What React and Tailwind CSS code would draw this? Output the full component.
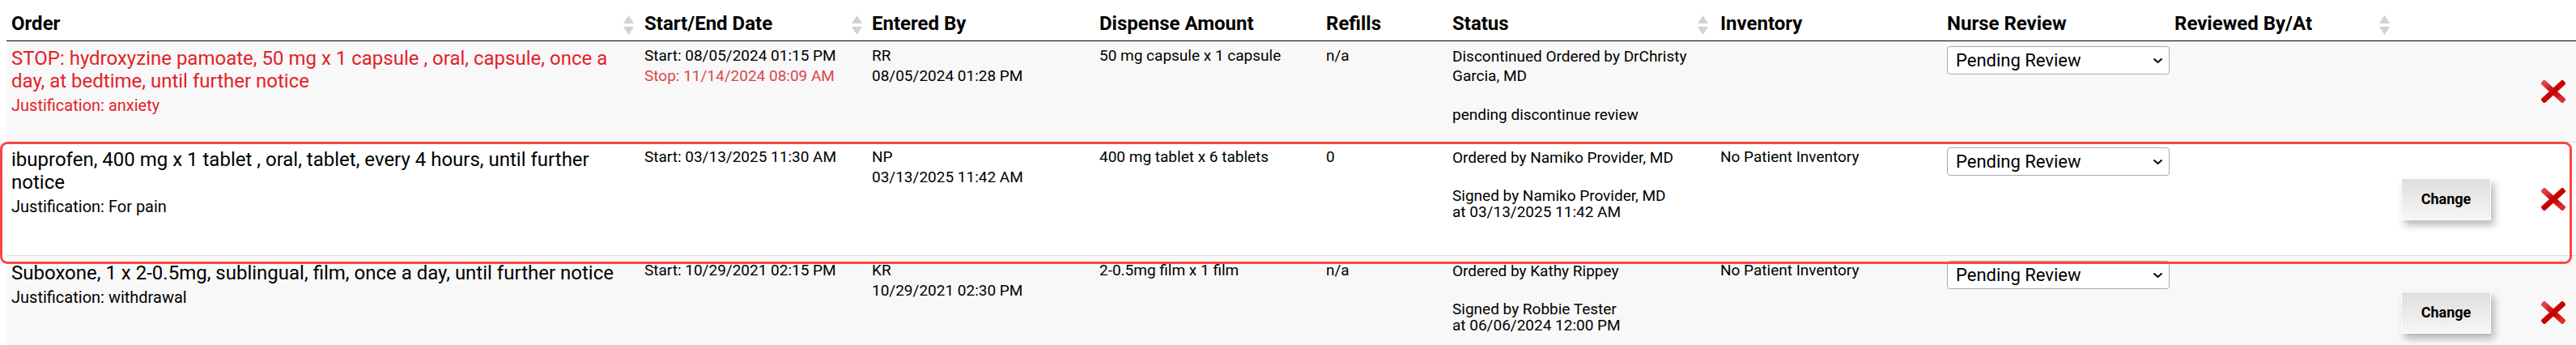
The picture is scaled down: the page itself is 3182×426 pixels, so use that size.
import React from 'react';

const GRID = 'grid grid-cols-[782px_281px_281px_280px_156px_331px_280px_281px_280px_173px_1fr]';

const SortArrows = () => (
  <svg width="13" height="24" viewBox="0 0 13 24" className="shrink-0">
    <polygon points="6.5,0 13,10 0,10" fill="#d2d2d2" />
    <polygon points="0,14 13,14 6.5,24" fill="#d2d2d2" />
  </svg>
);

const HeadCell = ({ children, sort, pr = 'pr-[6px]' }) => (
  <div className={`flex items-end justify-between pl-[6px] ${pr} pb-[7px]`}>
    <span className="text-[24px] leading-[28px] font-bold text-black whitespace-nowrap">{children}</span>
    {sort && <SortArrows />}
  </div>
);

const DeleteIcon = () => (
  <svg width="30" height="28" viewBox="0 0 30 28">
    <defs>
      <linearGradient id="xg" x1="0" y1="0" x2="1" y2="1">
        <stop offset="0" stopColor="#e24545" />
        <stop offset="0.5" stopColor="#c40000" />
        <stop offset="1" stopColor="#d83030" />
      </linearGradient>
    </defs>
    <path d="M4 4 L26 24 M26 4 L4 24" stroke="url(#xg)" strokeWidth="7" strokeLinecap="square" />
  </svg>
);

const NurseSelect = () => (
  <div className="w-[275px] h-[35px] flex items-center justify-between bg-white border border-[#aaa] rounded-[4px] pl-[10px] pr-[7px]">
    <span className="text-[22px] leading-none text-black">Pending Review</span>
    <svg width="13" height="8" viewBox="0 0 13 8">
      <path d="M1.5 1.5 L6.5 6 L11.5 1.5" fill="none" stroke="#000" strokeWidth="2" />
    </svg>
  </div>
);

const ChangeButton = () => (
  <button className="w-[111px] h-[52px] border border-white bg-linear-to-b from-[#dedede] to-[#f6f6f6] shadow-[4px_6px_9px_rgba(0,0,0,0.28)] text-[18px] font-bold text-black">
    Change
  </button>
);

const Cell = ({ children, className = '' }) => (
  <div className={`pl-[6px] pt-[5px] text-[19px] leading-[25px] text-black ${className}`}>{children}</div>
);

const rows = [
  {
    bg: 'bg-[#f8f8f8]',
    h: 'h-[125px]',
    stop: true,
    order: 'STOP: hydroxyzine pamoate, 50 mg x 1 capsule , oral, capsule, once a day, at bedtime, until further notice',
    justification: 'anxiety',
    start: 'Start: 08/05/2024 01:15 PM',
    end: 'Stop: 11/14/2024 08:09 AM',
    by: 'RR',
    enteredAt: '08/05/2024 01:28 PM',
    dispense: '50 mg capsule x 1 capsule',
    refills: 'n/a',
    ordered: 'Discontinued Ordered by DrChristy Garcia, MD',
    note: 'pending discontinue review',
    inventory: '',
    change: false,
  },
  {
    bg: 'bg-white',
    h: 'h-[140px]',
    selected: true,
    order: 'ibuprofen, 400 mg x 1 tablet , oral, tablet, every 4 hours, until further notice',
    justification: 'For pain',
    start: 'Start: 03/13/2025 11:30 AM',
    by: 'NP',
    enteredAt: '03/13/2025 11:42 AM',
    dispense: '400 mg tablet x 6 tablets',
    refills: '0',
    ordered: 'Ordered by Namiko Provider, MD',
    signed: ['Signed by Namiko Provider, MD', 'at 03/13/2025 11:42 AM'],
    inventory: 'No Patient Inventory',
    change: true,
  },
  {
    bg: 'bg-[#f8f8f8]',
    h: 'h-[140px]',
    order: 'Suboxone, 1 x 2-0.5mg, sublingual, film, once a day, until further notice',
    justification: 'withdrawal',
    start: 'Start: 10/29/2021 02:15 PM',
    by: 'KR',
    enteredAt: '10/29/2021 02:30 PM',
    dispense: '2-0.5mg film x 1 film',
    refills: 'n/a',
    ordered: 'Ordered by Kathy Rippey',
    signed: ['Signed by Robbie Tester', 'at 06/06/2024 12:00 PM'],
    inventory: 'No Patient Inventory',
    change: true,
  },
];

const OrderRow = ({ r }) => (
  <div className={`relative ${GRID} ${r.bg} ${r.h} border-b border-[#dddddd]`}>
    {r.selected && (
      <div className="absolute top-[-1px] bottom-[-11px] left-[-8px] right-[5px] z-10 border-[3px] border-[#fb4545] rounded-[9px] pointer-events-none" />
    )}

    {/* Order */}
    <div className={`pl-[6px] pr-[20px] pt-[7px] ${r.stop ? 'text-[#e3212a]' : 'text-black'}`}>
      <div className="text-[24px] leading-[28px]">{r.order}</div>
      <div className="mt-[5px] text-[20px] leading-[23px]">Justification: {r.justification}</div>
    </div>

    {/* Start/End */}
    <Cell>
      <div>{r.start}</div>
      {r.end && <div className="text-[#d9474a]">{r.end}</div>}
    </Cell>

    <Cell>
      <div>{r.by}</div>
      <div>{r.enteredAt}</div>
    </Cell>

    <Cell>{r.dispense}</Cell>
    <Cell>{r.refills}</Cell>

    {/* Status */}
    <Cell className="pr-[6px]">
      <div className="mt-[2px] leading-[24px]">{r.ordered}</div>
      {r.note && <div className="mt-[24px] leading-[24px]">{r.note}</div>}
      {r.signed && (
        <div className="mt-[25px] leading-[19.5px]">
          <div>{r.signed[0]}</div>
          <div>{r.signed[1]}</div>
        </div>
      )}
    </Cell>

    <Cell>{r.inventory}</Cell>

    <div className="pl-[6px] pt-[6px]">
      <NurseSelect />
    </div>

    <div />

    <div className="pl-[6px] self-center">{r.change && <ChangeButton />}</div>

    <div className="pl-[6px] self-center flex">
      <DeleteIcon />
    </div>
  </div>
);

export default function App() {
  return (
    <div className="w-[3182px] h-[426px] overflow-hidden bg-white font-['Roboto',sans-serif]">
      <div className="ml-[8px]">
        <div className={`${GRID} h-[51px] border-b border-black bg-white`}>
          <HeadCell sort pr="pr-[7px]">Order</HeadCell>
          <HeadCell sort>Start/End Date</HeadCell>
          <HeadCell>Entered By</HeadCell>
          <HeadCell>Dispense Amount</HeadCell>
          <HeadCell>Refills</HeadCell>
          <HeadCell sort pr="pr-[9px]">Status</HeadCell>
          <HeadCell>Inventory</HeadCell>
          <HeadCell>Nurse Review</HeadCell>
          <HeadCell sort pr="pr-[8px]">Reviewed By/At</HeadCell>
          <div />
          <div />
        </div>
        {rows.map((r, i) => (
          <OrderRow key={i} r={r} />
        ))}
      </div>
    </div>
  );
}
